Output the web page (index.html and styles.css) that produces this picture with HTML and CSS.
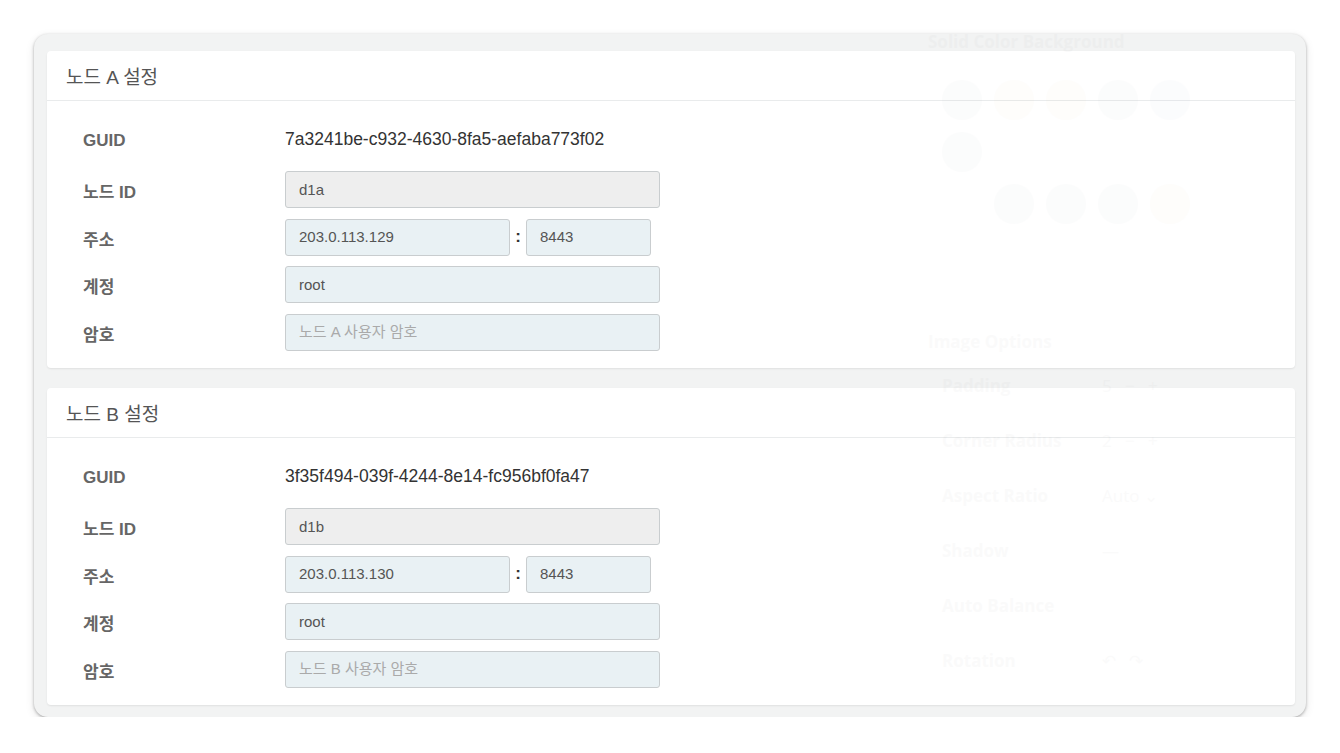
FILE: index.html
```html
<!DOCTYPE html>
<html lang="ko">
<head>
<meta charset="utf-8">
<title>노드 설정</title>
<link rel="stylesheet" href="styles.css">
</head>
<body>
<div class="frame">
  <section class="card">
    <header class="card-head">노드 A 설정</header>
    <div class="card-body">
      <div class="row row-text">
        <div class="label">GUID</div>
        <div class="value">7a3241be-c932-4630-8fa5-aefaba773f02</div>
      </div>
      <div class="row">
        <div class="label">노드 ID</div>
        <input class="field readonly" type="text" value="d1a" readonly>
      </div>
      <div class="row">
        <div class="label">주소</div>
        <div class="addr">
          <input class="field host" type="text" value="203.0.113.129">
          <span class="colon">:</span>
          <input class="field port" type="text" value="8443">
        </div>
      </div>
      <div class="row">
        <div class="label">계정</div>
        <input class="field" type="text" value="root">
      </div>
      <div class="row">
        <div class="label">암호</div>
        <input class="field" type="password" placeholder="노드 A 사용자 암호">
      </div>
    </div>
  </section>

  <section class="card">
    <header class="card-head">노드 B 설정</header>
    <div class="card-body">
      <div class="row row-text">
        <div class="label">GUID</div>
        <div class="value">3f35f494-039f-4244-8e14-fc956bf0fa47</div>
      </div>
      <div class="row">
        <div class="label">노드 ID</div>
        <input class="field readonly" type="text" value="d1b" readonly>
      </div>
      <div class="row">
        <div class="label">주소</div>
        <div class="addr">
          <input class="field host" type="text" value="203.0.113.130">
          <span class="colon">:</span>
          <input class="field port" type="text" value="8443">
        </div>
      </div>
      <div class="row">
        <div class="label">계정</div>
        <input class="field" type="text" value="root">
      </div>
      <div class="row">
        <div class="label">암호</div>
        <input class="field" type="password" placeholder="노드 B 사용자 암호">
      </div>
    </div>
  </section>

  <div class="ghost" aria-hidden="true">
    <div class="g-title">Solid Color Background</div>
    <div class="g-swatches">
      <span class="g-dot"></span><span class="g-dot warm"></span><span class="g-dot warm"></span><span class="g-dot"></span><span class="g-dot cool"></span>
      <span class="g-dot"></span>
    </div>
    <div class="g-swatches second">
      <span class="g-dot"></span><span class="g-dot"></span><span class="g-dot"></span><span class="g-dot warm"></span>
    </div>
    <div class="g-title g-sub">Image Options</div>
    <div class="g-opt"><span>Padding</span><span class="g-ctl">5 &nbsp; − &nbsp; +</span></div>
    <div class="g-opt"><span>Corner Radius</span><span class="g-ctl">2 &nbsp; − &nbsp; +</span></div>
    <div class="g-opt"><span>Aspect Ratio</span><span class="g-ctl">Auto ⌄</span></div>
    <div class="g-opt"><span>Shadow</span><span class="g-ctl">—</span></div>
    <div class="g-opt"><span>Auto Balance</span><span class="g-ctl"></span></div>
    <div class="g-opt"><span>Rotation</span><span class="g-ctl">↶ &nbsp; ↷</span></div>
  </div>
</div>
</body>
</html>
```

FILE: styles.css
```css
* {
  box-sizing: border-box;
}

html, body {
  margin: 0;
  padding: 0;
  background: #ffffff;
}

body {
  font-family: "Liberation Sans", Arial, "Noto Sans CJK KR", sans-serif;
  color: #333333;
}

.frame {
  position: relative;
  margin: 34px 34px 0 34px;
  width: 1272px;
  padding: 17px 11px 12px 13px;
  background: #f2f3f3;
  border-radius: 14px;
  box-shadow: 0 1px 3px rgba(0, 0, 0, 0.30), 0 3px 10px rgba(0, 0, 0, 0.10);
  display: flex;
  flex-direction: column;
  gap: 20px;
}

.card {
  background: #ffffff;
  border-radius: 4px;
  box-shadow: 0 1px 2px rgba(0, 0, 0, 0.08);
}

.card-head {
  height: 50px;
  padding: 0 19px 1px 19px;
  display: flex;
  align-items: center;
  font-size: 19px;
  color: #555555;
  border-bottom: 1px solid #e9ebec;
}

.card-body {
  padding: 20px 36px 17.5px 36px;
  display: flex;
  flex-direction: column;
  gap: 10.5px;
}

.row {
  display: flex;
  align-items: center;
  height: 37px;
}

.row-text {
  margin-bottom: 2.5px;
}

.label {
  width: 202px;
  flex: none;
  font-size: 17px;
  font-weight: bold;
  color: #666666;
  padding-top: 2px;
}

.value {
  font-size: 17.5px;
  color: #333333;
}

.field {
  width: 375px;
  height: 37px;
  padding: 0 13px 1px 13px;
  border: 1px solid #c9cdcf;
  border-radius: 3px;
  background: #e9f1f4;
  font-family: "Liberation Sans", Arial, "Noto Sans CJK KR", sans-serif;
  font-size: 15px;
  color: #555555;
  outline: none;
}

.field.readonly {
  background: #eeeeee;
}

.field::placeholder {
  color: #aaaaaa;
  font-size: 15px;
}

.addr {
  display: flex;
  align-items: center;
}

.field.host {
  width: 225px;
}

.field.port {
  width: 125px;
}

.colon {
  width: 16px;
  text-align: center;
  font-size: 17px;
  font-weight: bold;
  color: #333333;
}

/* faint overlay from a faded panel */
.ghost {
  position: absolute;
  left: 894px;
  top: -4px;
  width: 370px;
  opacity: 0.014;
  pointer-events: none;
  color: #000000;
  font-family: "Open Sans", "Liberation Sans", sans-serif;
}

.g-title {
  font-size: 17px;
  font-weight: bold;
  height: 28px;
}

.g-swatches {
  display: flex;
  flex-wrap: wrap;
  gap: 12px;
  width: 270px;
  margin: 22px 0 0 14px;
}

.g-swatches.second {
  margin-left: 66px;
  margin-top: 12px;
}

.g-dot {
  width: 40px;
  height: 40px;
  border-radius: 50%;
  background: #5a6f80;
}

.g-dot.warm {
  background: #e0a040;
}

.g-dot.cool {
  background: #6080c0;
}

.g-sub {
  margin-top: 106px;
}

.g-opt {
  display: flex;
  align-items: center;
  height: 55px;
  padding-left: 14px;
  font-size: 17px;
  font-weight: bold;
}

.g-opt span:first-child {
  width: 160px;
}

.g-ctl {
  font-weight: normal;
}
```
